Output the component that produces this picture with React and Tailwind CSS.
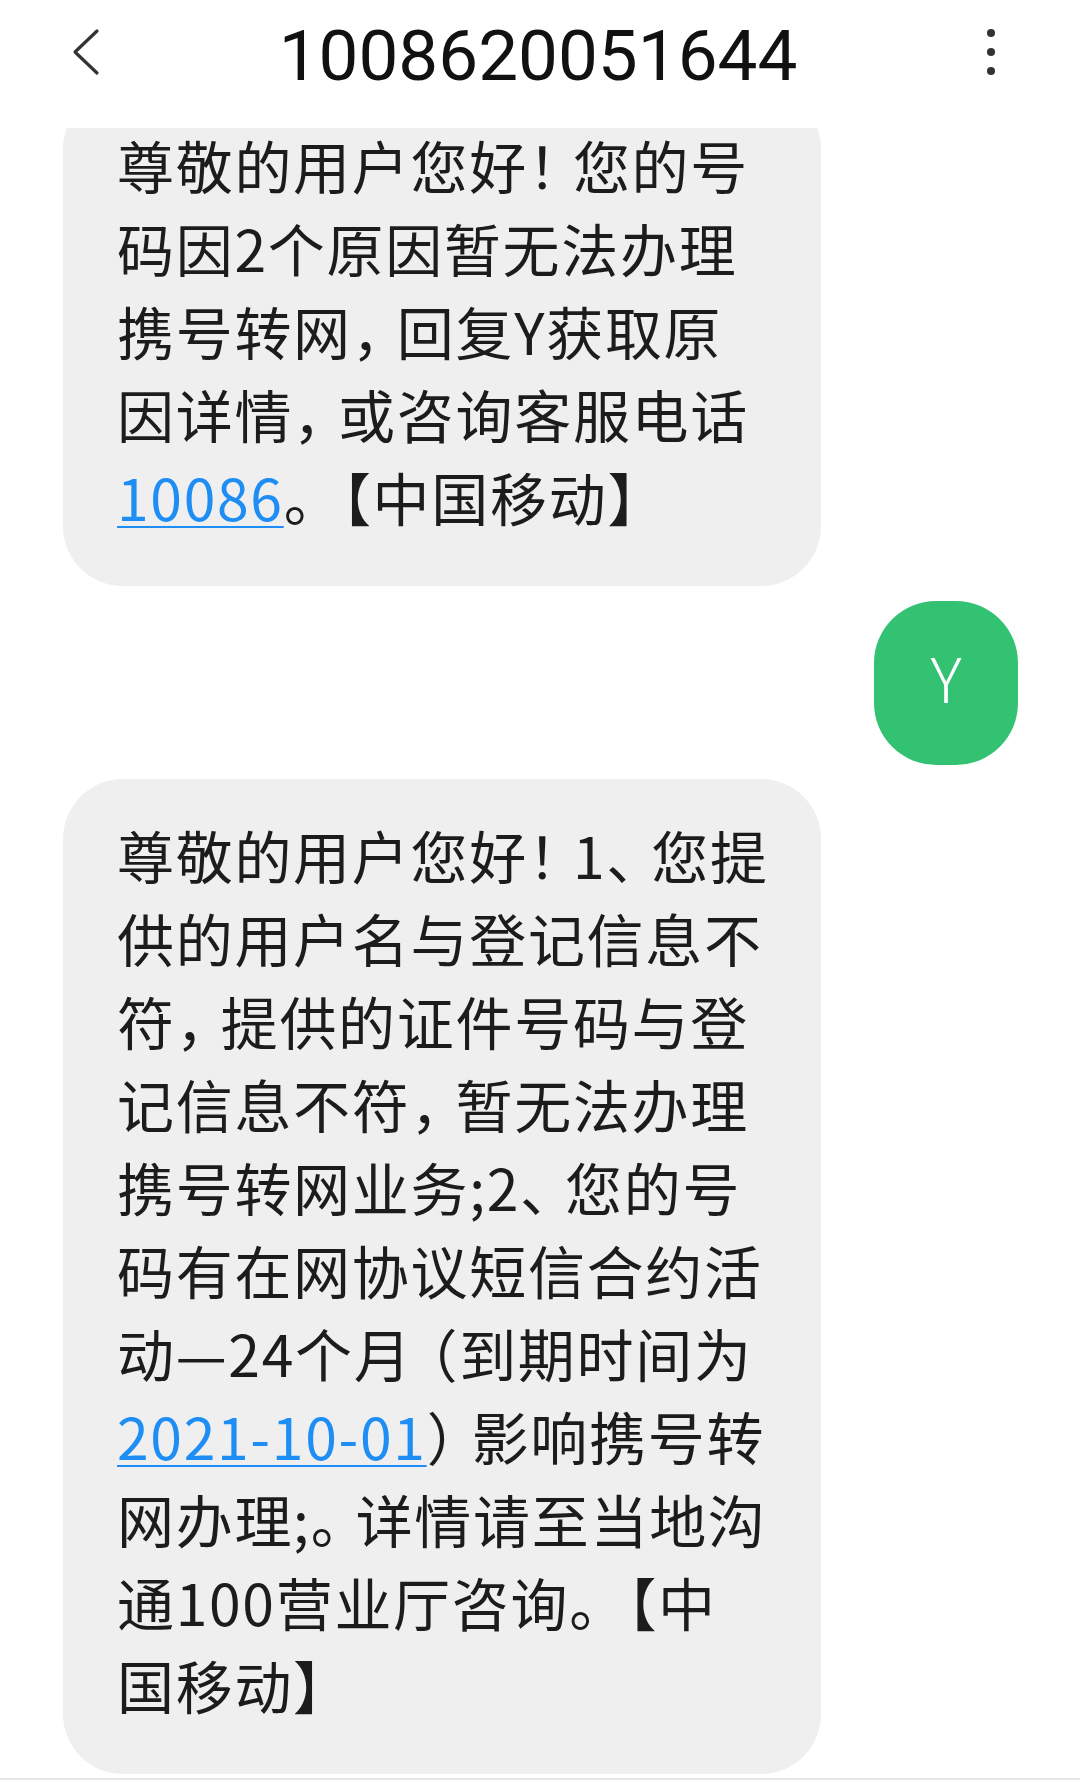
const Link = ({ children }) => (
  <span className="text-[#1e8ef5] underline decoration-[2px] underline-offset-[5px]">{children}</span>
)

// full-width punctuation is drawn narrower on the phone; "^" marks a narrow 。
const narrow = /([！，、（）^])/
const Txt = ({ s }) =>
  s.split(narrow).map((part, i) => {
    if (part === "（") return <span key={i} className="-ml-[12px]">（</span>
    if (part.length === 1 && narrow.test(part))
      return <span key={i} className="tracking-[-12px]">{part === "^" ? "。" : part}</span>
    return part
  })

const Bubble = ({ lines, className = "" }) => (
  <div
    className={`w-[758px] rounded-[60px] bg-[#efefef] pl-[54px] pt-[34px] pb-[48px] text-[57px] leading-[83px] tracking-[1.7px] text-[#1c1c1c] whitespace-nowrap font-['Noto_Sans_CJK_SC',sans-serif] ${className}`}
  >
    {lines.map((line, i) => (
      <div key={i}>{typeof line === "string" ? <Txt s={line} /> : line}</div>
    ))}
  </div>
)

const first = [
  "尊敬的用户您好！您的号",
  "码因2个原因暂无法办理",
  "携号转网，回复Y获取原",
  "因详情，或咨询客服电话",
  <>
    <Link>10086</Link>。【中国移动】
  </>,
]

const second = [
  "尊敬的用户您好！1、您提",
  "供的用户名与登记信息不",
  "符，提供的证件号码与登",
  "记信息不符，暂无法办理",
  "携号转网业务;2、您的号",
  "码有在网协议短信合约活",
  "动—24个月（到期时间为",
  <>
    <Link>2021-10-01</Link>
    <Txt s="）影响携号转" />
  </>,
  "网办理;^详情请至当地沟",
  "通100营业厅咨询。【中",
  "国移动】",
]

const App = () => {
  return (
    <div className="flex h-[1788px] w-[1080px] flex-col overflow-hidden bg-white">
      {/* header */}
      <div className="relative z-10 h-[128px] shrink-0 bg-white">
        <div className="grid h-[108px] grid-cols-[1fr_auto_1fr] items-center">
          <svg className="ml-[69px] -mt-[4px] justify-self-start" width="32" height="48" viewBox="0 0 32 48" fill="none">
            <path d="M28 3 L6 24 L28 45" stroke="#333" strokeWidth="3.2" strokeLinecap="round" strokeLinejoin="round" />
          </svg>
          <div className="mt-[2px] mr-[4px] font-['Roboto',sans-serif] text-[71px] leading-none text-[#111]">1008620051644</div>
          <div className="mr-[85px] -mt-[4px] flex flex-col items-center gap-[11px] justify-self-end">
            <span className="h-[8px] w-[8px] rounded-full bg-[#333]" />
            <span className="h-[8px] w-[8px] rounded-full bg-[#333]" />
            <span className="h-[8px] w-[8px] rounded-full bg-[#333]" />
          </div>
        </div>
      </div>

      {/* messages */}
      <div className="flex flex-1 flex-col overflow-hidden">
        <Bubble lines={first} className="ml-[63px] -mt-[39px]" />

        <div className="mt-[15px] mr-[62px] flex h-[164px] w-[144px] items-center justify-center self-end rounded-[62px] bg-[#33c172] pb-[14px] font-['Noto_Sans_CJK_SC',sans-serif] text-[62px] font-light text-white">
          Y
        </div>

        <Bubble lines={second} className="ml-[63px] mt-[14px]" />
      </div>

      <div className="h-[10px] shrink-0 border-t-2 border-[#e6e6e6]" />
    </div>
  )
}

export default App
